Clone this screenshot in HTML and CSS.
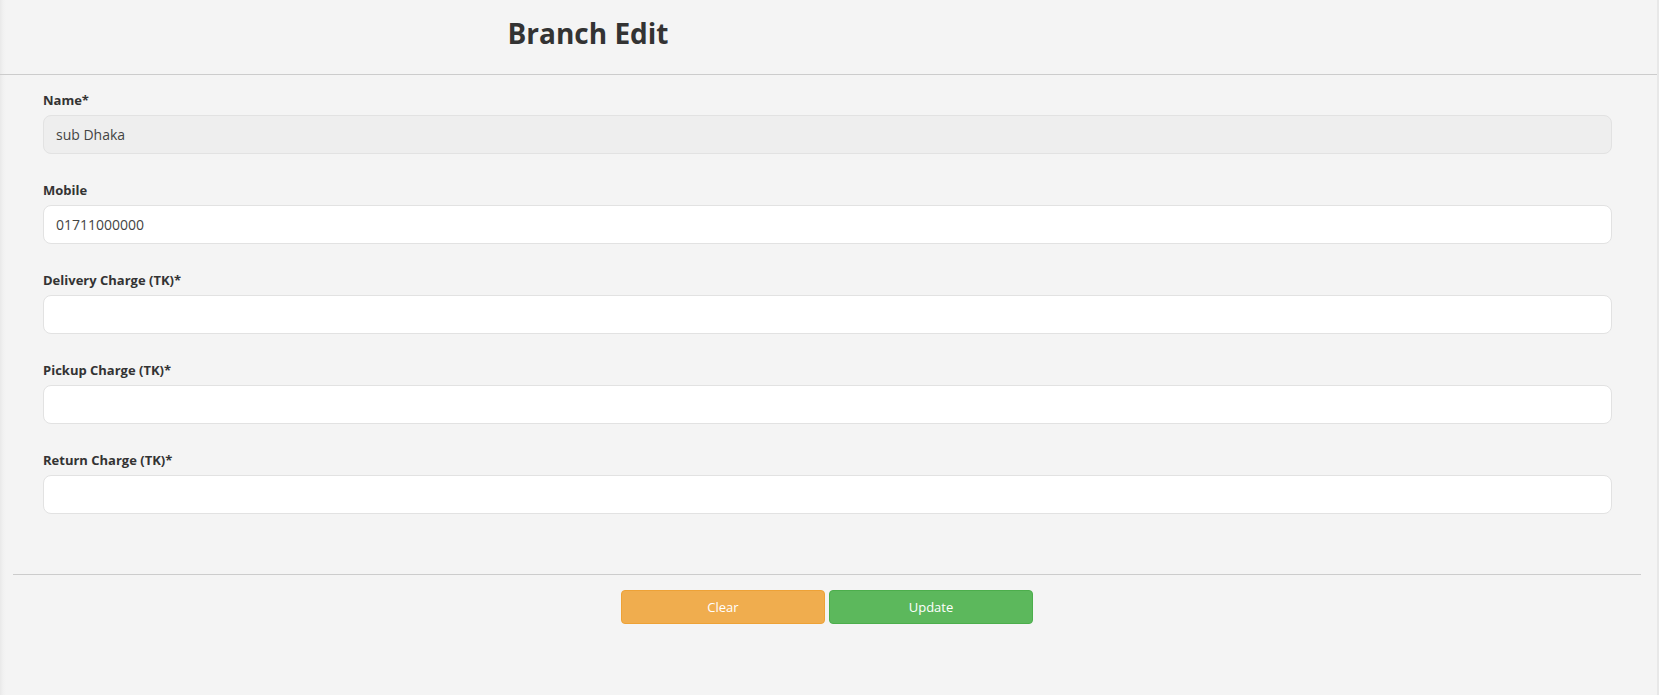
FILE: index.html
```html
<!DOCTYPE html>
<html>
<head>
<meta charset="utf-8">
<link rel="stylesheet" href="styles.css">
</head>
<body>
<div class="page">
  <header class="header">
    <h1 class="title">Branch Edit</h1>
  </header>
  <form class="form">
    <div class="group">
      <label class="label">Name*</label>
      <input class="input input-readonly" type="text" value="sub Dhaka" readonly>
    </div>
    <div class="group">
      <label class="label">Mobile</label>
      <input class="input" type="text" value="01711000000">
    </div>
    <div class="group">
      <label class="label">Delivery Charge (TK)*</label>
      <input class="input" type="text">
    </div>
    <div class="group">
      <label class="label">Pickup Charge (TK)*</label>
      <input class="input" type="text">
    </div>
    <div class="group">
      <label class="label">Return Charge (TK)*</label>
      <input class="input" type="text">
    </div>
  </form>
  <div class="footer">
    <div class="actions">
      <button class="btn btn-clear" type="button">Clear</button>
      <button class="btn btn-update" type="button">Update</button>
    </div>
  </div>
</div>
</body>
</html>
```

FILE: styles.css
```css
html, body {
  margin: 0;
  padding: 0;
}
body {
  background: #f4f4f4;
  font-family: "Open Sans", "Liberation Sans", sans-serif;
  color: #333;
  width: 1659px;
  height: 695px;
  overflow: hidden;
}
.page {
  height: 695px;
  background: linear-gradient(to right, #e9e9e9 0px, #f1f1f1 3px, #f4f4f4 6px, #f4f4f4 1657px, #e8e8e8 1657px);
}
.header {
  height: 74px;
  border-bottom: 1px solid #cccccc;
  margin-right: 2px;
  display: flex;
}
.title {
  margin: 0;
  width: 1176px;
  text-align: center;
  font-size: 28px;
  font-weight: 700;
  line-height: 28px;
  padding-top: 19px;
  color: #333;
}
.form {
  padding: 15px 47px 0 43px;
}
.group {
  display: flex;
  flex-direction: column;
  margin-bottom: 26px;
}
.group:last-child {
  margin-bottom: 0;
}
.label {
  font-size: 13px;
  font-weight: 700;
  line-height: 20px;
  height: 20px;
  margin-bottom: 5px;
  color: #333;
}
.input {
  box-sizing: border-box;
  height: 39px;
  width: 100%;
  border: 1px solid #e2e2e2;
  border-radius: 8px;
  background: #ffffff;
  padding: 0 12px;
  font-family: inherit;
  font-size: 14px;
  color: #444;
  outline: none;
}
.input-readonly {
  background: #eeeeee;
}
.footer {
  margin: 60px 18px 0 13px;
  border-top: 1px solid #cccccc;
  padding-top: 15px;
}
.actions {
  display: flex;
  justify-content: center;
  gap: 4px;
}
.btn {
  box-sizing: border-box;
  width: 204px;
  height: 34px;
  border-radius: 4px;
  color: #fff;
  font-family: inherit;
  font-size: 13px;
  cursor: pointer;
}
.btn-clear {
  background: #f0ad4e;
  border: 1px solid #eea236;
}
.btn-update {
  background: #5cb85c;
  border: 1px solid #4cae4c;
}
```
